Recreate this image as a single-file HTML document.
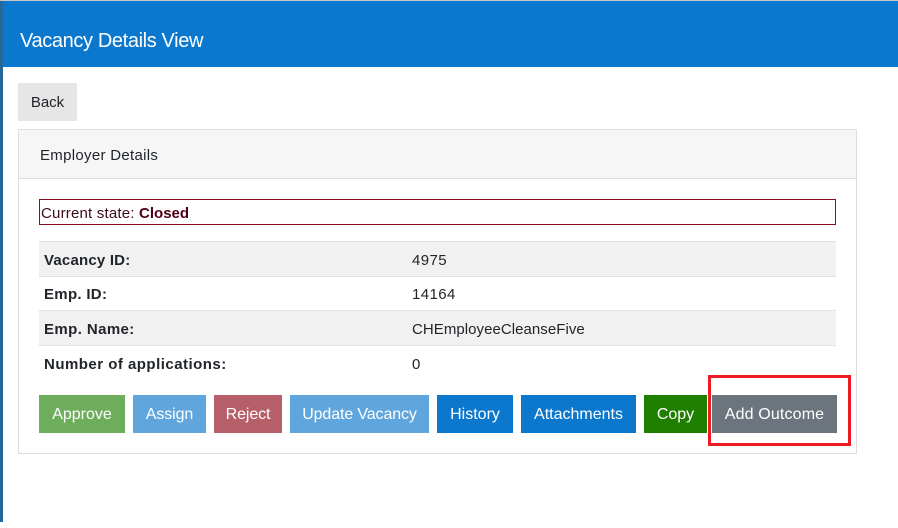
<!DOCTYPE html>
<html><head><meta charset="utf-8"><style>
html,body{margin:0;padding:0;background:#fff;width:898px;height:528px;overflow:hidden}
body{position:relative;font-family:"Liberation Sans",sans-serif;font-size:16px;color:#212529}
div{position:absolute;box-sizing:border-box;white-space:nowrap}
.t{line-height:20px}
.b{top:396px;height:37px;line-height:37px;text-align:center;color:#fff}
.bg{top:395px;height:38px}
.r{left:39px;width:797px}
.l{left:44px;font-weight:bold}
.v{left:412px}
</style></head><body>
<div style="left:0;top:0;width:898px;height:1px;background:#c4c9ce"></div>
<div style="left:0;top:1px;width:3px;height:521px;background:#23689c"></div>
<div style="left:3px;top:1px;width:895px;height:66px;background:#0b78ce"></div>
<div class="t" style="left:20px;top:31px;color:#fff;font-size:20px;letter-spacing:-.37px">Vacancy Details View</div>
<div style="left:18px;top:83px;width:59px;height:38px;background:#e6e6e6"></div>
<div style="left:18px;top:84px;width:59px;height:37px;line-height:37px;text-align:center;font-size:15px">Back</div>

<div style="left:18px;top:129px;width:839px;height:325px;border:1px solid #dedede"></div>
<div style="left:19px;top:130px;width:837px;height:49px;background:#f6f6f6;border-bottom:1px solid #dcdcdc"></div>
<div class="t" style="left:40px;top:146px;font-size:15px;letter-spacing:.3px">Employer Details</div>

<div style="left:39px;top:199px;width:797px;height:26px;border:1px solid #85101f"></div>
<div class="t" style="left:41px;top:204px;font-size:15px;color:#3a0a18;letter-spacing:.2px">Current state: <b style="color:#4f0016;letter-spacing:0">Closed</b></div>

<div class="r" style="top:241px;height:36px;background:#f1f1f1;border-top:1px solid #dee2e6;border-bottom:1px solid #dee2e6"></div>
<div class="r" style="top:310px;height:36px;background:#f1f1f1;border-top:1px solid #dee2e6;border-bottom:1px solid #dee2e6"></div>
<div class="t l" style="top:251px;font-size:15px;letter-spacing:.2px">Vacancy ID:</div><div class="t v" style="top:251px;font-size:15px;letter-spacing:.4px">4975</div>
<div class="t l" style="top:285px;font-size:15px;letter-spacing:.3px">Emp. ID:</div><div class="t v" style="top:285px;font-size:15px;letter-spacing:.4px">14164</div>
<div class="t l" style="top:320px;font-size:15px;letter-spacing:.4px">Emp. Name:</div><div class="t v" style="top:320px;font-size:15px;letter-spacing:.05px">CHEmployeeCleanseFive</div>
<div class="t l" style="top:355px;font-size:15px;letter-spacing:.48px">Number of applications:</div><div class="t v" style="top:355px;font-size:15px">0</div>

<div class="bg" style="left:39px;width:86px;background:#6dad5c"></div>
<div class="bg" style="left:133px;width:73px;background:#60a6de"></div>
<div class="bg" style="left:214px;width:68px;background:#b65f69"></div>
<div class="bg" style="left:290px;width:139px;background:#60a6de"></div>
<div class="bg" style="left:437px;width:76px;background:#0b78ce"></div>
<div class="bg" style="left:521px;width:115px;background:#0b78ce"></div>
<div class="bg" style="left:644px;width:63px;background:#1e7f00"></div>
<div class="bg" style="left:712px;width:125px;background:#6c757d"></div>
<div class="b" style="left:39px;width:86px">Approve</div>
<div class="b" style="left:133px;width:73px;letter-spacing:-.1px">Assign</div>
<div class="b" style="left:214px;width:68px;letter-spacing:-.1px">Reject</div>
<div class="b" style="left:290px;width:139px;letter-spacing:-.12px">Update Vacancy</div>
<div class="b" style="left:437px;width:76px">History</div>
<div class="b" style="left:521px;width:115px">Attachments</div>
<div class="b" style="left:644px;width:63px">Copy</div>
<div class="b" style="left:712px;width:125px;letter-spacing:.15px">Add Outcome</div>
<div style="left:708px;top:375px;width:143px;height:71px;border:3px solid #ed1c24"></div>
</body></html>
